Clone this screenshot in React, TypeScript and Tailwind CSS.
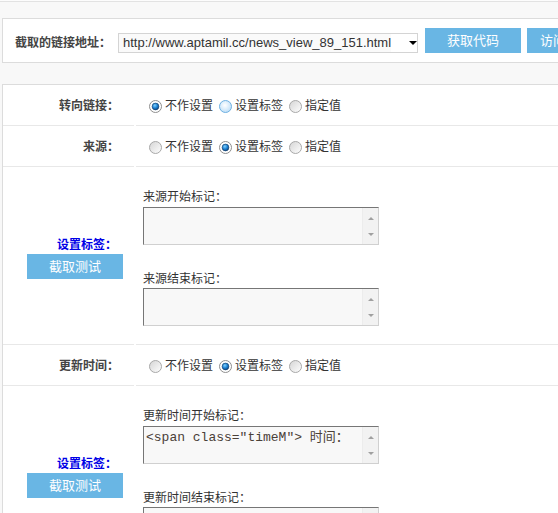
import React from 'react';

type RadioState = 'on' | 'off' | 'hover';

function Radio({ state }: { state: RadioState }) {
  if (state === 'on') {
    return (
      <svg width="13" height="13" viewBox="0 0 13 13" className="shrink-0">
        <defs>
          <radialGradient id="rOn" cx="40%" cy="35%" r="70%">
            <stop offset="0%" stopColor="#7fd0ff" />
            <stop offset="55%" stopColor="#1a7fd0" />
            <stop offset="100%" stopColor="#0b3f7a" />
          </radialGradient>
        </defs>
        <circle cx="6.5" cy="6.5" r="6" fill="#fff" stroke="#8e8e8e" />
        <circle cx="6.5" cy="6.5" r="3.4" fill="url(#rOn)" stroke="#123a66" strokeWidth="0.6" />
      </svg>
    );
  }
  if (state === 'hover') {
    return (
      <svg width="13" height="13" viewBox="0 0 13 13" className="shrink-0">
        <defs>
          <radialGradient id="rHv" cx="45%" cy="40%" r="65%">
            <stop offset="0%" stopColor="#ffffff" />
            <stop offset="100%" stopColor="#b9dcf7" />
          </radialGradient>
        </defs>
        <circle cx="6.5" cy="6.5" r="6" fill="url(#rHv)" stroke="#6fb0e0" />
      </svg>
    );
  }
  return (
    <svg width="13" height="13" viewBox="0 0 13 13" className="shrink-0">
      <defs>
        <linearGradient id="rOff" x1="0" y1="0" x2="1" y2="1">
          <stop offset="0%" stopColor="#d4d4d4" />
          <stop offset="100%" stopColor="#ffffff" />
        </linearGradient>
      </defs>
      <circle cx="6.5" cy="6.5" r="6" fill="url(#rOff)" stroke="#a8a8a8" />
    </svg>
  );
}

function Options({ states }: { states: RadioState[] }) {
  const labels = ['不作设置', '设置标签', '指定值'];
  return (
    <div className="flex items-center">
      {labels.map((l, i) => (
        <label key={l} className="flex items-center mr-[6px]">
          <Radio state={states[i]} />
          <span className="ml-[3px]">{l}</span>
        </label>
      ))}
    </div>
  );
}

function Area({ text }: { text?: string }) {
  return (
    <div className="flex w-[236px] h-[38px] border border-t-[#767676] border-l-[#767676] border-r-[#d0d0d0] border-b-[#d0d0d0] bg-[#f8f8f8]">
      <div className="flex-1 pl-[2px] pt-[3px] leading-[16px] text-[13px] text-[#4a4038] whitespace-pre [font-family:'Liberation_Mono','Noto_Sans_CJK_SC',monospace]">
        {text}
      </div>
      <div className="w-[16px] border-l border-[#ececec] bg-[#f2f2f2] flex flex-col justify-between items-center pt-[9px] pb-[8px]">
        <span className="w-0 h-0 border-l-[3px] border-r-[3px] border-b-[3px] border-l-transparent border-r-transparent border-b-[#a0a0a0]" />
        <span className="w-0 h-0 border-l-[3px] border-r-[3px] border-t-[3px] border-l-transparent border-r-transparent border-t-[#a0a0a0]" />
      </div>
    </div>
  );
}

function SimpleRow({ label, states }: { label: string; states: RadioState[] }) {
  return (
    <div className="flex h-[41px]">
      <div className="w-[131px] border-b border-[#e8e8e8] flex items-center justify-end pr-[15px] pt-[2px] font-bold text-[#444]">
        {label}
      </div>
      <div className="ml-[2px] flex-1 border-b border-[#e8e8e8] flex items-center pl-[13px] pt-[2px]">
        <Options states={states} />
      </div>
    </div>
  );
}

function TagRow({
  startLabel,
  endLabel,
  startText,
}: {
  startLabel: string;
  endLabel: string;
  startText?: string;
}) {
  return (
    <div className="flex h-[178px]">
      <div className="w-[131px] border-b border-[#e8e8e8] flex flex-col pt-[70px]">
        <div className="text-right pr-[17px] font-bold text-[#0000e6] leading-[16px]">设置标签：</div>
        <button className="mt-[1px] ml-[24px] w-[96px] h-[25px] bg-[#69b6e4] text-white text-[13px]">
          截取测试
        </button>
      </div>
      <div className="ml-[2px] flex-1 border-b border-[#e8e8e8] pl-[7px] pt-[22px]">
        <div className="leading-[16px] mb-[2px]">{startLabel}</div>
        <Area text={startText} />
        <div className="leading-[16px] mt-[26px] mb-[1px]">{endLabel}</div>
        <Area />
      </div>
    </div>
  );
}

export default function App() {
  return (
    <div className="w-[558px] h-[513px] overflow-hidden bg-[#f8f8f8] text-[12px] text-[#333] [font-family:'Liberation_Sans','Noto_Sans_CJK_SC',sans-serif]">
      <div className="h-[2px] bg-[#fcfcfc] border-b border-[#e2e2e2]" />

      {/* Link bar */}
      <div className="mt-[16px] ml-[2px] w-[620px] h-[45px] bg-white border border-[#dcdcdc] flex items-end pl-[12px] pb-[9px] whitespace-nowrap">
        <span className="shrink-0 font-bold text-[#444] mb-[2px] leading-[16px]">截取的链接地址：</span>
        <div className="shrink-0 ml-[7px] w-[300px] h-[20px] border border-[#d4d4d4] bg-white flex items-center">
          <span className="flex-1 pl-[4px] text-[13px] text-[#333] leading-[18px] bg-[#fafafa] mr-[18px]">
            http://www.aptamil.cc/news_view_89_151.html
          </span>
          <span className="mr-[6px] w-0 h-0 border-l-[4px] border-r-[4px] border-t-[4px] border-l-transparent border-r-transparent border-t-black" />
        </div>
        <button className="shrink-0 ml-[7px] w-[96px] h-[25px] bg-[#69b6e4] text-white text-[13px]">获取代码</button>
        <button className="shrink-0 ml-[6px] w-[96px] h-[25px] bg-[#69b6e4] text-white text-[13px] text-left pl-[13px]">
          访问网址
        </button>
      </div>

      {/* Main settings */}
      <div className="mt-[21px] ml-[2px] w-[620px] bg-white border-l border-t border-[#dcdcdc]">
        <SimpleRow label="转向链接：" states={['on', 'hover', 'off']} />
        <SimpleRow label="来源：" states={['off', 'on', 'off']} />
        <TagRow startLabel="来源开始标记：" endLabel="来源结束标记：" />
        <SimpleRow label="更新时间：" states={['off', 'on', 'off']} />
        <TagRow
          startLabel="更新时间开始标记："
          endLabel="更新时间结束标记："
          startText={'<span class="timeM"> 时间：'}
        />
      </div>
    </div>
  );
}
